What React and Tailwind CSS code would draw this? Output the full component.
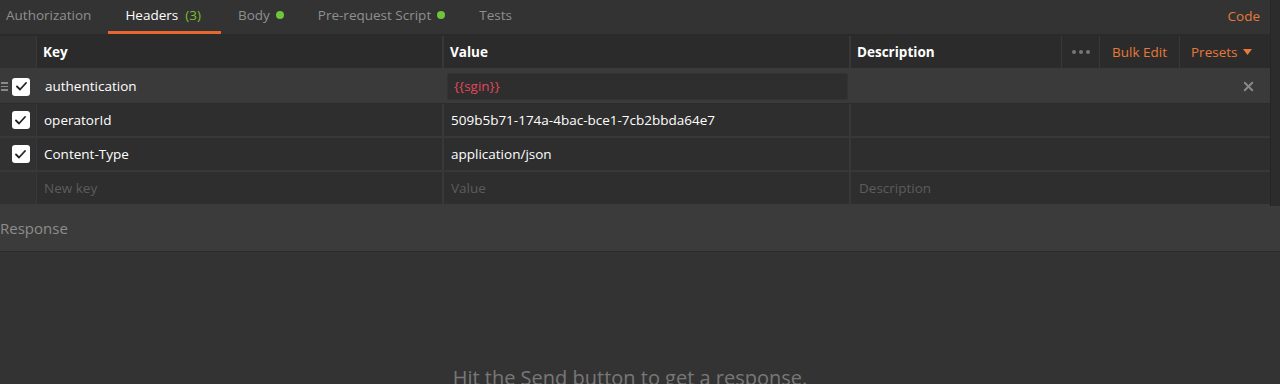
import { X } from 'lucide-react';

const font = { fontFamily: '"Open Sans", "Noto Sans", sans-serif' };

function Check() {
  return (
    <span className="flex h-[18px] w-[18px] items-center justify-center rounded-[3px] bg-white">
      <svg width="11" height="9" viewBox="0 0 11 9" fill="none">
        <path d="M1 4.5 L4 7.5 L10 1" stroke="#222" strokeWidth="1.8" strokeLinecap="round" strokeLinejoin="round" />
      </svg>
    </span>
  );
}

function Dot() {
  return <span className="ml-[6px] inline-block h-[8px] w-[8px] rounded-full bg-[#6cc53b]" />;
}

export default function App() {
  const rows = [
    { key: 'operatorId', value: '509b5b71-174a-4bac-bce1-7cb2bbda64e7' },
    { key: 'Content-Type', value: 'application/json' },
  ];

  return (
    <div className="h-[384px] w-[1280px] overflow-hidden bg-[#333333] text-[13.5px]" style={font}>
      <div className="flex">
        <div className="flex-1">
          {/* Tabs */}
          <div className="flex h-[35px] items-stretch border-b border-[#2a2a2a] text-[#8f8f8f]">
            <div className="flex items-center pb-[4px] pl-[6px] pr-[17px]">Authorization</div>
            <div className="relative flex items-center pb-[4px] pl-[17px] pr-[20px] text-white">
              Headers <span className="ml-[7px] text-[#7dbb2f]">(3)</span>
              <span className="absolute bottom-0 left-0 right-0 h-[3px] bg-[#e8672f]" />
            </div>
            <div className="flex items-center px-[17px] pb-[4px]">Body<Dot /></div>
            <div className="flex items-center px-[17px] pb-[4px]">Pre-request Script<Dot /></div>
            <div className="flex items-center px-[17px] pb-[4px]">Tests</div>
            <div className="ml-auto flex items-center pb-[2px] pr-[10px] text-[#e8793a]">Code</div>
          </div>

          {/* Header row */}
          <div className="flex h-[35px] border-b-2 border-[#3a3a3a] bg-[#2b2b2b] pt-[1px] font-bold text-white">
            <div className="w-[37px] border-r border-[#3a3a3a] bg-[#303030]" />
            <div className="flex w-[407px] items-center border-r-2 border-[#383838] pl-[6px]">Key</div>
            <div className="flex w-[407px] items-center border-r-2 border-[#383838] pl-[6px]">Value</div>
            <div className="flex flex-1 items-center pl-[6px]">Description</div>
            <div className="flex w-[39px] items-center justify-center gap-[3px] border-x border-[#383838]">
              <span className="h-[4px] w-[4px] rounded-full bg-[#777]" />
              <span className="h-[4px] w-[4px] rounded-full bg-[#777]" />
              <span className="h-[4px] w-[4px] rounded-full bg-[#777]" />
            </div>
            <div className="flex w-[80px] items-center justify-center border-r border-[#383838] font-normal text-[#e8793a]">Bulk Edit</div>
            <div className="flex w-[90px] items-center pl-[11px] font-normal text-[#e8793a]">
              Presets
              <svg className="ml-[6px]" width="9" height="6" viewBox="0 0 9 6"><path d="M0 0 H9 L4.5 6 Z" fill="#e8793a" /></svg>
            </div>
          </div>

          {/* authentication row (hovered) */}
          <div className="flex h-[34px] border-b border-[#2c2c2c] bg-[#3a3a3a] text-white">
            <div className="flex w-[37px] items-center">
              <span className="flex w-[12px] flex-col gap-[2px] pl-[1px]">
                <span className="h-[1.5px] w-[7px] bg-[#8a8a8a]" />
                <span className="h-[1.5px] w-[7px] bg-[#8a8a8a]" />
                <span className="h-[1.5px] w-[7px] bg-[#8a8a8a]" />
              </span>
              <Check />
            </div>
            <div className="flex w-[407px] items-center pl-[8px]">authentication</div>
            <div className="flex w-[407px] items-center px-[3px]">
              <div className="flex h-[27px] w-full items-center rounded-[2px] border border-[#333] bg-[#2e2e2e] pl-[6px] text-[#e2475a]">{'{{sgin}}'}</div>
            </div>
            <div className="flex flex-1 items-center justify-end pr-[14px]">
              <X size={15} strokeWidth={3} className="text-[#8a8a8a]" />
            </div>
          </div>

          {rows.map(r => (
            <div key={r.key} className="flex h-[34px] border-b-2 border-[#383838] bg-[#2e2e2e] text-white">
              <div className="flex w-[37px] items-center justify-center border-r border-[#383838] bg-[#313131] pl-[5px]">
                <Check />
              </div>
              <div className="flex w-[407px] items-center border-r-2 border-[#383838] pl-[7px]">{r.key}</div>
              <div className="flex w-[407px] items-center border-r-2 border-[#383838] pl-[7px]">{r.value}</div>
              <div className="flex-1" />
            </div>
          ))}

          <div className="flex h-[34px] border-b-2 border-[#3a3a3a] bg-[#2e2e2e] text-[#5c5c5c]">
            <div className="w-[37px] border-r border-[#383838] bg-[#313131]" />
            <div className="flex w-[407px] items-center border-r-2 border-[#383838] pl-[7px]">New key</div>
            <div className="flex w-[407px] items-center border-r-2 border-[#383838] pl-[7px]">Value</div>
            <div className="flex flex-1 items-center pl-[8px]">Description</div>
          </div>
        </div>
        <div className="w-[10px] border-l border-[#262626] bg-[#2c2c2c]" />
      </div>

      {/* Response */}
      <div className="flex h-[46px] items-center border-b border-[#2a2a2a] bg-[#3b3b3b] text-[15px] text-[#8d8d8d]">
        Response
      </div>
      <div className="flex flex-col items-center pr-[20px] pt-[112px] text-[20px] leading-[28px] text-[#777]">
        Hit the Send button to get a response.
      </div>
    </div>
  );
}
